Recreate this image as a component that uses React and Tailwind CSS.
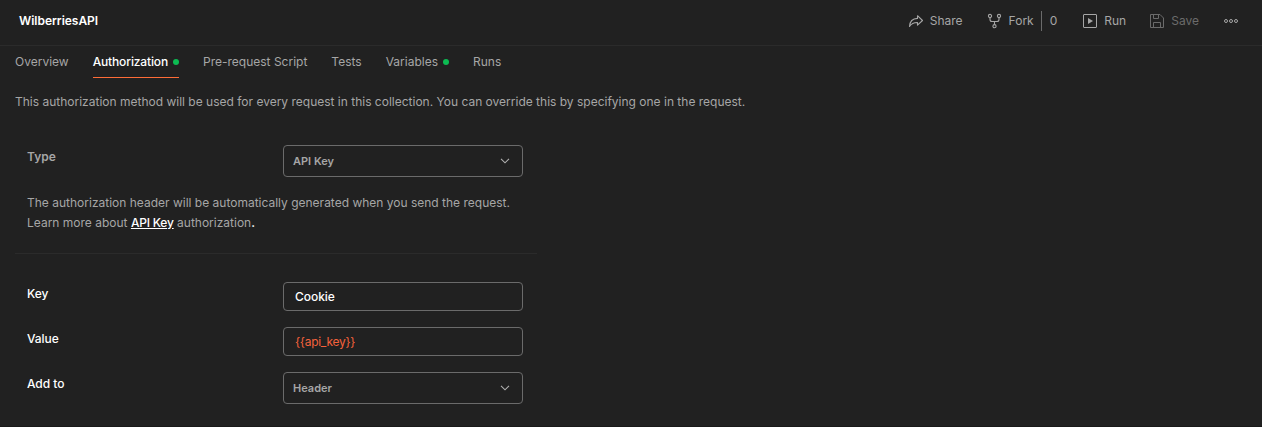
const Chevron = () => (
  <svg width="10" height="6" viewBox="0 0 10 6" fill="none" stroke="#b0b0b0" strokeWidth="1.1"><path d="M1 0.8L5 4.8L9 0.8" /></svg>
);

const ShareIcon = () => (
  <svg width="16" height="16" viewBox="0 0 16 16" fill="none" stroke="currentColor" strokeWidth="1.1" strokeLinejoin="round">
    <path d="M9.5 2.7L14.5 7.5L9.5 12.2V9.5C5.8 9.4 3.4 10.6 1.5 13.5C1.8 8.7 4.5 5.6 9.5 5.4Z" />
  </svg>
);

const ForkIcon = () => (
  <svg width="16" height="16" viewBox="0 0 16 16" fill="none" stroke="currentColor" strokeWidth="1.1">
    <circle cx="3" cy="3" r="1.6" />
    <circle cx="12" cy="3" r="1.6" />
    <circle cx="7.5" cy="13.2" r="1.6" />
    <path d="M3 4.6V6.5Q3 8.5 5 8.5H10Q12 8.5 12 6.5V4.6M7.5 8.5V11.6" />
  </svg>
);

const RunIcon = () => (
  <svg width="16" height="16" viewBox="0 0 16 16" fill="none" stroke="currentColor" strokeWidth="1">
    <rect x="1.5" y="1.5" width="13" height="13" rx="0.5" />
    <path d="M6 5L11 8L6 11Z" fill="currentColor" stroke="none" />
  </svg>
);

const SaveIcon = () => (
  <svg width="16" height="16" viewBox="0 0 16 16" fill="none" stroke="currentColor" strokeWidth="1">
    <path d="M1.5 1.5H11L14.5 5V14.5H1.5ZM4.5 1.5V5.5H9.5V1.5M4.5 14.5V9.5H11.5V14.5" />
  </svg>
);

const MoreIcon = () => (
  <svg width="16" height="16" viewBox="0 0 16 16" fill="none" stroke="currentColor" strokeWidth="1">
    <circle cx="3" cy="8" r="1.5" />
    <circle cx="8" cy="8" r="1.5" />
    <circle cx="13" cy="8" r="1.5" />
  </svg>
);

const Action = ({ icon, label, className = "" }) => (
  <button className={`flex items-center gap-1.5 ${className}`}>
    {icon}
    <span>{label}</span>
  </button>
);

const Select = ({ children }) => (
  <button className="flex h-8 w-[240px] items-center justify-between rounded-[4px] border border-[#6b6b6b] pr-3 pl-[9px] text-[11px] font-semibold text-[#a6a6a6]">
    {children}
    <Chevron />
  </button>
);

const Field = ({ value, className }) => (
  <div className={`flex h-[29px] w-[240px] items-center rounded-[4px] border border-[#6b6b6b] px-[11px] ${className}`}>{value}</div>
);

const Row = ({ label, className = "font-medium tracking-[-0.05px] text-white", children }) => (
  <div className="flex items-start">
    <div className={`w-[256px] pt-[2px] leading-5 ${className}`}>{label}</div>
    {children}
  </div>
);

const Tab = ({ children, active, dot }) => (
  <div className="flex h-8 flex-col">
    <div className={`flex flex-1 items-center gap-[5px] ${active ? "font-medium tracking-[-0.14px] text-white" : ""}`}>
      {children}
      {dot && <span className="size-1.5 rounded-full bg-[#0cbb52]" />}
    </div>
    <div className={`h-px w-full ${active ? "bg-[#ff6c37]" : ""}`} />
  </div>
);

export default function App() {
  return (
    <div className="flex h-[427px] flex-col border-b border-b-[#191919] bg-[#212121] font-['Inter',sans-serif] text-[12px] text-[#a6a6a6]">
      <header className="flex h-[46px] shrink-0 items-center border-b border-b-[#2b2b2b] pr-[23px] pb-1 pl-[19px]">
        <h1 className="font-semibold tracking-[-0.03px] text-white">WilberriesAPI</h1>
        <div className="ml-auto flex items-center">
          <Action icon={<ShareIcon />} label="Share" />
          <Action className="ml-6" icon={<ForkIcon />} label="Fork" />
          <span className="ml-[7px] h-5 w-px bg-[#6b6b6b]" />
          <span className="ml-2">0</span>
          <Action className="ml-[25px]" icon={<RunIcon />} label="Run" />
          <Action className="ml-[23px] text-[#6b6b6b]" icon={<SaveIcon />} label="Save" />
          <button className="ml-6"><MoreIcon /></button>
        </div>
      </header>
      <nav className="flex gap-6 px-[15px]">
        <Tab>Overview</Tab>
        <Tab active dot>Authorization</Tab>
        <Tab>Pre-request Script</Tab>
        <Tab>Tests</Tab>
        <Tab dot>Variables</Tab>
        <Tab>Runs</Tab>
      </nav>
      <p className="mt-[14px] px-[15px] leading-5">
        This authorization method will be used for every request in this collection. You can override this by specifying one in the request.
      </p>
      <main className="mt-[33px] ml-[15px] w-[522px]">
        <section className="border-b border-b-[#2b2b2b] px-3 pb-5">
          <Row label="Type" className="font-semibold text-[#a6a6a6]"><Select>API Key</Select></Row>
          <p className="mt-4 leading-5">
            The authorization header will be automatically generated when you send the request.
            <br />
            Learn more about <a className="font-medium tracking-[-0.2px] text-white underline">API Key</a> authorization<span className="font-semibold text-white">.</span>
          </p>
        </section>
        <section className="mt-7 flex flex-col gap-4 px-3">
          <Row label="Key"><Field value="Cookie" className="font-medium tracking-[-0.05px] text-white" /></Row>
          <Row label="Value"><Field value="{{api_key}}" className="tracking-[-0.28px] text-[#f4613c]" /></Row>
          <Row label="Add to"><Select>Header</Select></Row>
        </section>
      </main>
    </div>
  );
}
